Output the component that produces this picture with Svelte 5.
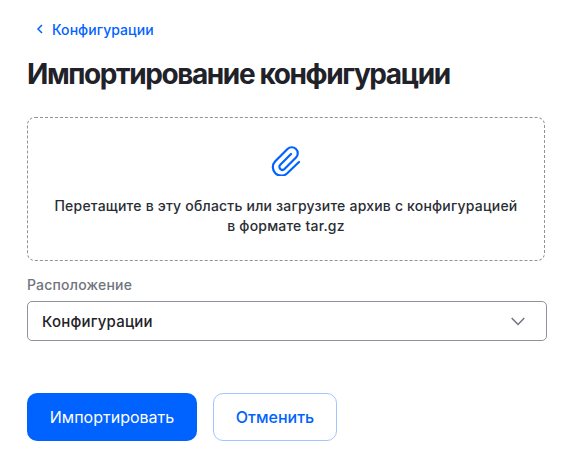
<script>
	let location = 'Конфигурации';
</script>

<main>
	<a href="#back" class="back">
		<svg width="8" height="12" viewBox="0 0 8 12" fill="none">
			<path d="M6 2 2 6l4 4" stroke="currentColor" stroke-width="1.5" />
		</svg>
		Конфигурации
	</a>
	<h1>Импортирование конфигурации</h1>

	<div class="drop">
		<svg class="clip" width="30" height="30" viewBox="40 17 30 30" fill="none">
			<path
				d="M68 33 56 44.500A8.500 8.500 0 0 1 44 32.500L56.500 20A6 6 0 0 1 65 28.500L53.500 40A3 3 0 0 1 49.300 35.700L60 25"
				stroke="currentColor"
				stroke-width="2.200"
				stroke-linecap="round"
			/>
		</svg>
		<p>Перетащите в эту область или загрузите архив с конфигурацией<br />в формате tar.gz</p>
	</div>

	<div class="field">
		<span class="label">Расположение</span>
		<div class="select">
			<span>{location}</span>
			<svg width="14" height="9" viewBox="0 0 14 9" fill="none">
				<path d="M.7 1 7 7.500 13.300 1" stroke="currentColor" stroke-width="1.500" />
			</svg>
		</div>
	</div>

	<div class="actions">
		<button class="primary">Импортировать</button>
		<button class="ghost">Отменить</button>
	</div>
</main>

<style>
	:global(body) {
		margin: 0;
		background: #fff;
		font-family: Inter, 'Noto Sans', sans-serif;
		color: #1f2229;
	}

	main {
		padding: 20px 32px 0 27px;
		display: flex;
		flex-direction: column;
	}

	.back {
		display: flex;
		align-items: center;
		gap: 8px;
		padding-left: 9px;
		height: 18px;
		color: #0062ff;
		text-decoration: none;
		font-size: 14px;
		font-weight: 500;
		letter-spacing: 0.05px;
	}

	h1 {
		margin: 17px 0 0;
		font-size: 28px;
		line-height: 38px;
		font-weight: 700;
		letter-spacing: -1.4px;
	}

	.drop {
		margin-top: 24px;
		width: 518px;
		height: 144px;
		box-sizing: border-box;
		border: 1px dashed #8f939c;
		border-radius: 8px;
		display: flex;
		flex-direction: column;
		align-items: center;
		padding-top: 28px;
		margin-right: 2px;
	}

	.clip {
		color: #0062ff;
	}

	.drop p {
		margin: 20px 0 0;
		text-align: center;
		font-size: 14px;
		line-height: 20px;
		font-weight: 500;
		letter-spacing: 0.2px;
		color: #2a2d34;
	}

	.field {
		margin-top: 14px;
		display: flex;
		flex-direction: column;
		gap: 6px;
	}

	.label {
		font-size: 14px;
		line-height: 20px;
		color: #70747d;
		font-weight: 500;
		letter-spacing: 0.2px;
	}

	.select {
		height: 40px;
		box-sizing: border-box;
		border: 1px solid #8f939c;
		border-radius: 5px;
		display: flex;
		align-items: center;
		justify-content: space-between;
		padding: 0 21px 0 14px;
		font-size: 15px;
		font-weight: 500;
		letter-spacing: 0.2px;
	}

	.select svg {
		color: #70747d;
	}

	.actions {
		margin-top: 52px;
		display: flex;
		gap: 16px;
	}

	button {
		height: 48px;
		border-radius: 10px;
		font-family: inherit;
		font-size: 16px;
		font-weight: 500;
	}

	.primary {
		width: 170px;
		background: #0062ff;
		border: none;
		color: #fff;
		font-weight: 400;
	}

	.ghost {
		width: 124px;
		background: #fff;
		border: 1px solid #a3c5ff;
		color: #0062ff;
	}
</style>
